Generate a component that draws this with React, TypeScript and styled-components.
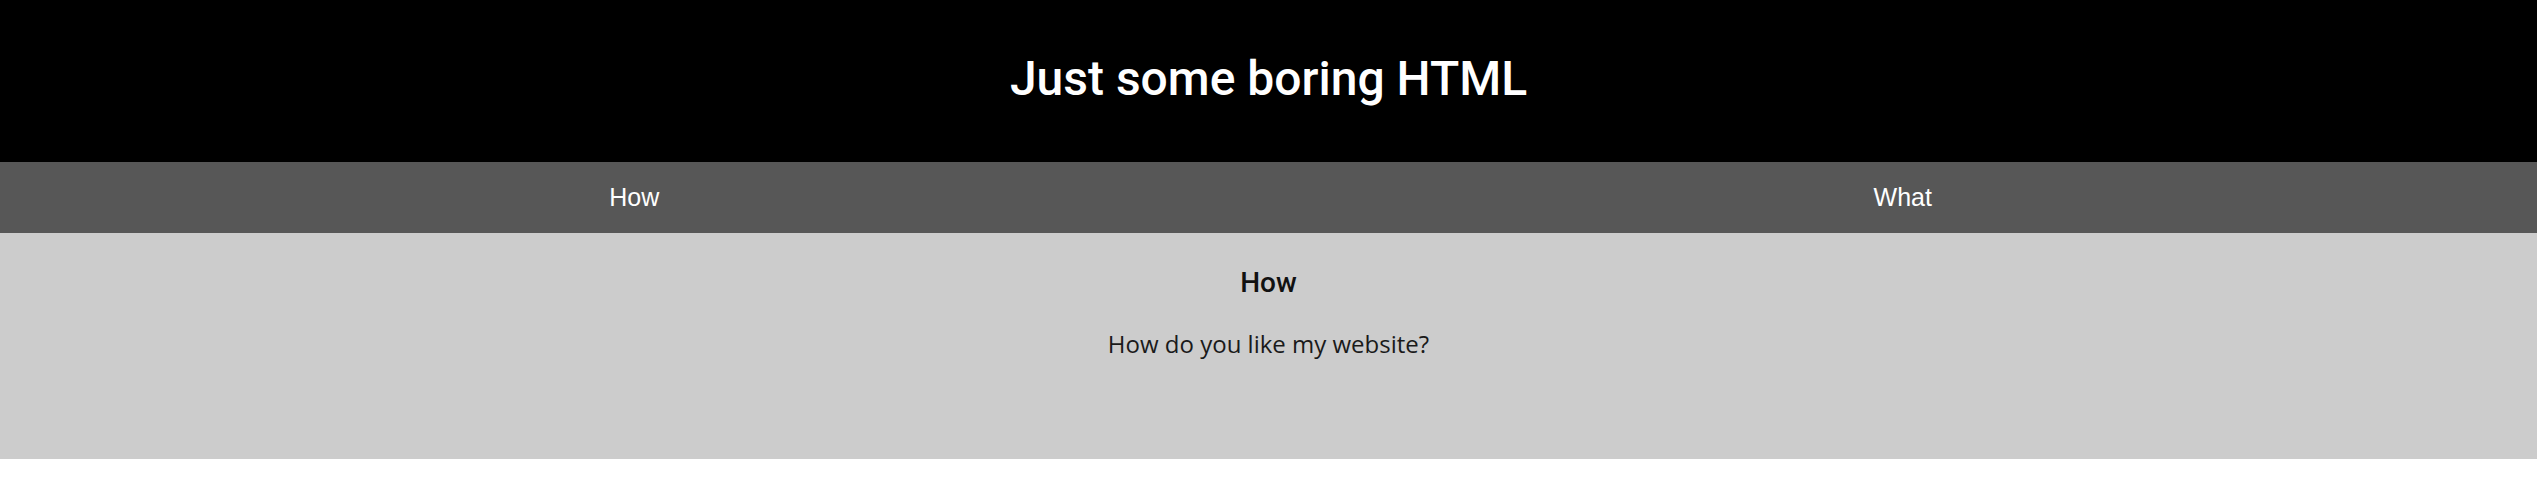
import styled, { createGlobalStyle } from "styled-components";

const GlobalStyle = createGlobalStyle`
  html, body {
    margin: 0;
    padding: 0;
    background: #ffffff;
  }
`;

const Page = styled.div`
  margin-right: 10px;
  display: flex;
  flex-direction: column;
`;

const Header = styled.header`
  height: 162px;
  background: #000000;
  display: flex;
  justify-content: center;
  align-items: flex-start;
  box-sizing: border-box;
  padding-top: 50px;
`;

const Title = styled.h1`
  margin: 0;
  color: #ffffff;
  font-family: Roboto, "Liberation Sans", sans-serif;
  font-weight: 500;
  font-size: 48px;
  line-height: normal;
`;

const Nav = styled.nav`
  height: 71px;
  background: #575757;
  display: flex;
`;

const NavItem = styled.a`
  flex: 1;
  display: flex;
  justify-content: center;
  align-items: center;
  color: #ffffff;
  text-decoration: none;
  font-family: "Liberation Sans Narrow", "Liberation Sans", Arial, sans-serif;
  font-size: 25px;
`;

const Section = styled.section`
  height: 226px;
  background: #cccccc;
  box-sizing: border-box;
  padding-top: 33px;
  display: flex;
  flex-direction: column;
  align-items: center;
  gap: 28px;
`;

const Heading = styled.h2`
  margin: 0;
  color: #111111;
  font-family: Roboto, "Liberation Sans", sans-serif;
  font-weight: 500;
  font-size: 28px;
  line-height: normal;
`;

const Text = styled.p`
  margin: 0;
  color: #1a1a1a;
  font-family: "Open Sans", "Liberation Sans", sans-serif;
  font-size: 24px;
  line-height: normal;
`;

export default function App() {
  return (
    <>
      <GlobalStyle />
      <Page>
        <Header>
          <Title>Just some boring HTML</Title>
        </Header>
        <Nav>
          <NavItem href="#how">How</NavItem>
          <NavItem href="#what">What</NavItem>
        </Nav>
        <Section id="how">
          <Heading>How</Heading>
          <Text>How do you like my website?</Text>
        </Section>
      </Page>
    </>
  );
}
